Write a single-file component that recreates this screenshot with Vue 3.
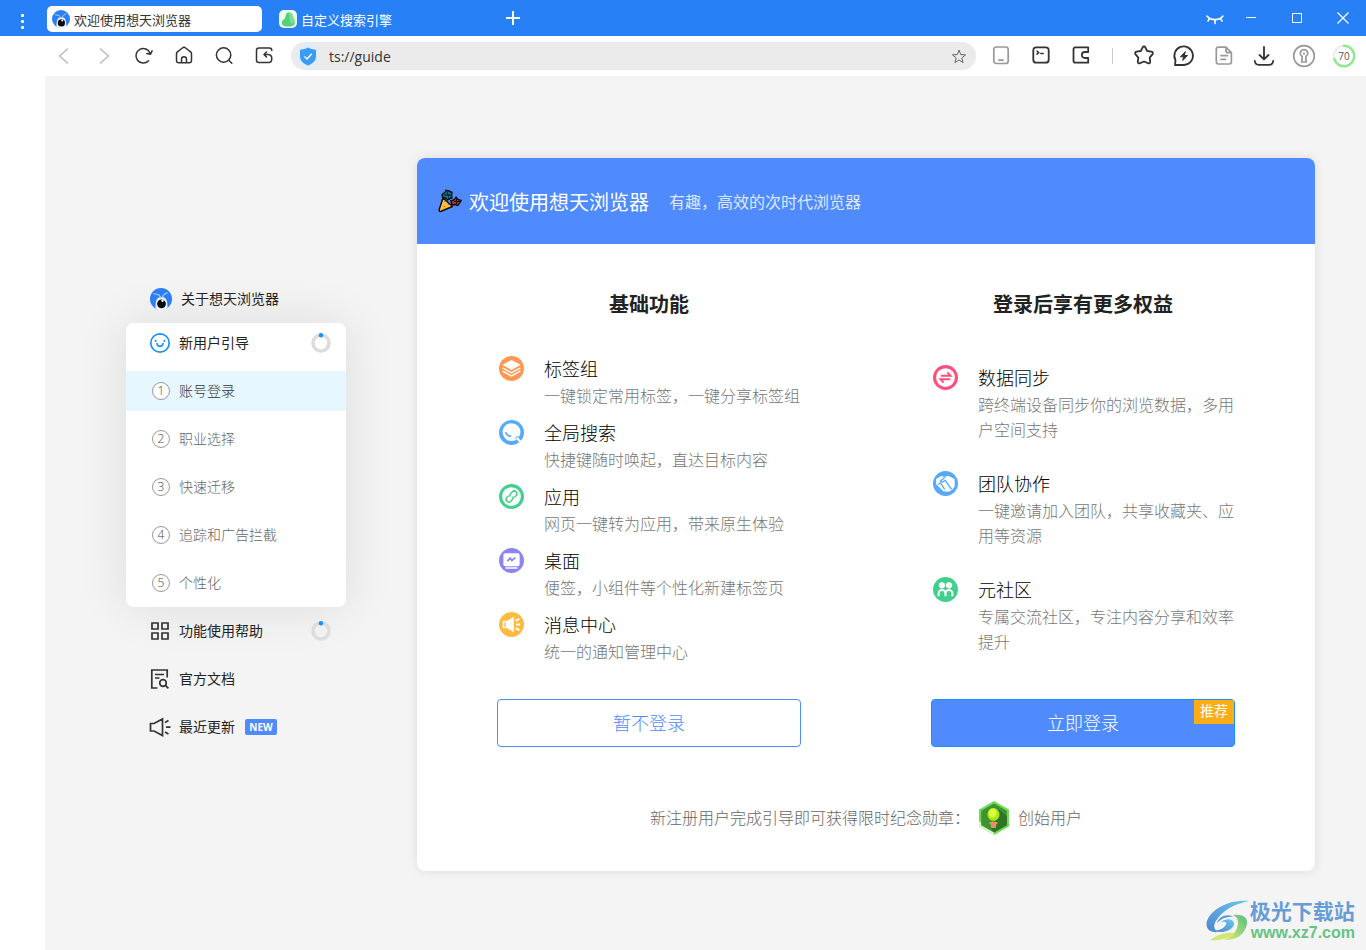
<script setup>
import { ref } from 'vue'

const address = ref('ts://guide')
const activeStep = ref(0)
const steps = ['账号登录', '职业选择', '快速迁移', '追踪和广告拦截', '个性化']

const basics = [
  { icon: 'layers', title: '标签组', text: '一键锁定常用标签，一键分享标签组' },
  { icon: 'search', title: '全局搜索', text: '快捷键随时唤起，直达目标内容' },
  { icon: 'link', title: '应用', text: '网页一键转为应用，带来原生体验' },
  { icon: 'desktop', title: '桌面', text: '便签，小组件等个性化新建标签页' },
  { icon: 'horn', title: '消息中心', text: '统一的通知管理中心' }
]

const benefits = [
  { icon: 'sync', title: '数据同步', text: '跨终端设备同步你的浏览数据，多用户空间支持' },
  { icon: 'team', title: '团队协作', text: '一键邀请加入团队，共享收藏夹、应用等资源' },
  { icon: 'people', title: '元社区', text: '专属交流社区，专注内容分享和效率提升' }
]

const icons = {
  layers:
    '<circle cx="12" cy="12" r="12" fill="#ff9750"/><path d="M12 3.800l8.800 4.600-8.800 5-8.800-5z" fill="#fff"/><path d="M3.500 11.500l8.500 4.600 8.500-4.600M3.500 14.600l8.500 4.600 8.500-4.600" fill="none" stroke="#fff" stroke-width="1.400"/>',
  search:
    '<circle cx="12" cy="12" r="12" fill="#57a9fb"/><circle cx="12" cy="11.600" r="8.600" fill="#fff"/><path d="M17.500 17.500l3.400 3.800" stroke="#fff" stroke-width="2"/><path d="M15.800 17.600l2.800-2.400" stroke="#57a9fb" stroke-width="1"/><path d="M6.600 12.200c.7 2 2.300 3.200 4.400 3.300" fill="none" stroke="#57a9fb" stroke-width="1.600" stroke-linecap="round"/>',
  link:
    '<circle cx="12" cy="12" r="12" fill="#3fd08c"/><circle cx="12" cy="12" r="9" fill="#fff"/><g fill="none" stroke="#3fd08c" stroke-width="1.400" stroke-linecap="round"><path d="M10.600 11.600a2.600 2.600 0 0 1 .6-2.400l1.600-1.700a2.500 2.500 0 0 1 3.600 3.500l-1.300 1.400"/><path d="M13.400 12.400a2.600 2.600 0 0 1-.6 2.400l-1.600 1.700a2.500 2.500 0 0 1-3.600-3.500l1.300-1.400"/></g>',
  desktop:
    '<circle cx="12" cy="12" r="12" fill="#8a85f7"/><rect x="4.200" y="5" width="15.600" height="12.400" rx="1.800" fill="#fff"/><path d="M6.800 19.200h10.400" stroke="#fff" stroke-width="1.400" stroke-linecap="round"/><path d="M8 12.600l2.800-2.800 1.600 2.200 3.400-2.800" fill="none" stroke="#8a85f7" stroke-width="1.700"/>',
  horn:
    '<circle cx="12" cy="12" r="12" fill="#ffba42"/><path d="M3.600 8.400h4.200l6.400-3.800v14.800l-6.400-3.800H3.600z" fill="#fff"/><path d="M5.900 9.600v4.800" stroke="#ffba42" stroke-width="1.300"/><path d="M16 8.600l3.400-2M16.400 12h3.800M16 15.400l3.400 2" stroke="#fff" stroke-width="2"/>',
  sync:
    '<circle cx="12" cy="12" r="12" fill="#ff4f7b"/><circle cx="12" cy="12" r="9" fill="#fff"/><path d="M7.400 10.300h9.400l-3-3.200M16.600 13.700H7.200l3 3.200" fill="none" stroke="#ff4f7b" stroke-width="1.900"/>',
  team:
    '<circle cx="12" cy="12" r="12" fill="#57a9fb"/><path d="M3 7.600l5-2.800 3 1 3.500-1.200 6.300 3v7.200l-2.600 3.400-3.600 1.600-4.600-.4L3 12.800z" fill="#fff"/><path d="M11.400 6L7 9.600c1.400 1.600 3.400.6 4.600-.6l6.200 8.600M5 13l2.200-1.600 4 6.200" fill="none" stroke="#57a9fb" stroke-width="1.300"/>',
  people:
    '<circle cx="12" cy="12" r="12" fill="#3fd08c"/><circle cx="8.600" cy="8" r="3" fill="#fff"/><circle cx="15.400" cy="8" r="3" fill="#fff"/><path d="M5.400 18.500v-2.700a3.300 3.300 0 0 1 6.600 0v2.700M12 18.500v-2.700a3.300 3.300 0 0 1 6.600 0v2.700" fill="none" stroke="#fff" stroke-width="2"/>'
}
</script>

<template>
  <div class="browser">
    <header class="titlebar">
      <button class="menu" aria-label="菜单">
        <svg width="4" height="16" viewBox="0 0 4 16" fill="#fff">
          <rect x="0" y="0" width="3" height="3" rx="1" /><rect x="0" y="6" width="3" height="3" rx="1" /><rect x="0" y="12" width="3" height="3" rx="1" />
        </svg>
      </button>
      <button class="tab current">
        <svg width="18" height="18" viewBox="0 0 22 22">
          <circle cx="11" cy="11" r="11" fill="#2b7ff2" />
          <path d="M5.500 20.500c0-8 1-11.500 6-11.500s6 4 6 11.300a11 11 0 0 1-12 .2z" fill="#eef5ff" />
          <path d="M3.500 5.500L9 7l2 3M17.500 4.500L14 6.500l-2 3" fill="none" stroke="#a9ccff" stroke-width="1.200" />
          <circle cx="11.500" cy="15.800" r="4.400" fill="#0b0b0b" /><circle cx="12.500" cy="12.800" r="1.200" fill="#fff" />
        </svg>
        <span>欢迎使用想天浏览器</span>
      </button>
      <button class="tab">
        <svg width="18" height="18" viewBox="0 0 18 18">
          <rect width="18" height="18" rx="5" fill="#eafbf0" />
          <path d="M9 2.500c3-.6 4.600 1.200 4.800 3.500.2 2 2 3.200 2 6 0 3.500-2.500 4.500-6 4.500-4 0-7-.8-7-3.800 0-2.500 2.500-3 3.300-4.700C7 6.200 6.500 3.200 9 2.500z" fill="#57cf76" />
          <path d="M9 2.500c3-.6 4.600 1.200 4.800 3.500.2 2 2 3.200 2 6-2 2-4 2-5-1s1-5-1.800-8.500z" fill="#7be096" />
        </svg>
        <span>自定义搜索引擎</span>
      </button>
      <button class="newtab" aria-label="新标签页">
        <svg width="14" height="14" viewBox="0 0 14 14"><path d="M7 0v14M0 7h14" stroke="#fff" stroke-width="2" /></svg>
      </button>
      <div class="window">
        <button class="eye" aria-label="隐藏">
          <svg width="20" height="12" viewBox="0 0 20 12" fill="none" stroke="#fff" stroke-width="1.600" stroke-linecap="round"><path d="M2 3c4 4.800 12 4.800 16 0M4.500 5.500L3 8M10 7v3.500M15.500 5.500L17 8" /></svg>
        </button>
        <button aria-label="最小化"><svg width="12" height="12" viewBox="0 0 12 12"><path d="M1 5.500h10" stroke="#fff" /></svg></button>
        <button aria-label="最大化"><svg width="12" height="12" viewBox="0 0 12 12"><path d="M1.500 1.500h9v9h-9z" fill="none" stroke="#fff" /></svg></button>
        <button aria-label="关闭"><svg width="12" height="12" viewBox="0 0 12 12"><path d="M.5.5l11 11M11.500.5l-11 11" stroke="#fff" stroke-width="1.200" /></svg></button>
      </div>
    </header>

    <div class="toolbar">
      <button class="tool dim" aria-label="后退"><svg viewBox="0 0 24 24"><path d="M15.500 5l-8 7 8 7" /></svg></button>
      <button class="tool dim" aria-label="前进"><svg viewBox="0 0 24 24"><path d="M8.500 5l8 7-8 7" /></svg></button>
      <button class="tool" aria-label="刷新"><svg viewBox="0 0 24 24"><path d="M16.600 16.800A7.300 7.300 0 1 1 18.200 9.500M14.800 9.500l3.600.8 1.700-3.400" /></svg></button>
      <button class="tool" aria-label="主页"><svg viewBox="0 0 24 24"><path d="M4.500 9.800c0-.8.300-1.400.9-1.900l5-3.900a2.400 2.400 0 0 1 3.200 0l5 3.900c.6.500.9 1.100.9 1.900v6.600c0 1.500-.8 2.300-2.300 2.300H6.800c-1.500 0-2.300-.8-2.300-2.300zM9.500 18.700v-3.500a2.500 2.500 0 0 1 5 0v3.500" /></svg></button>
      <button class="tool" aria-label="搜索"><svg viewBox="0 0 24 24"><circle cx="11.600" cy="11" r="7.200" /><path d="M16.800 16.200l3 3" /></svg></button>
      <button class="tool" aria-label="恢复标签"><svg viewBox="0 0 24 24"><path d="M19.800 6.500c0-1.500-.9-2.500-2.400-2.500H6.900C5.400 4 4.500 4.800 4.500 6.300v10c0 1.500.9 2.300 2.400 2.300h9.500M14.500 8L12 10.500l2.500 2.500M12.300 10.500h3.800a4 4 0 0 1 3.700 4c0 2.500-1.300 4.100-3.400 4.100" /></svg></button>

      <div class="address">
        <svg width="26" height="26" viewBox="0 0 26 26">
          <circle cx="13" cy="13" r="12.500" fill="#dfeeff" />
          <path d="M13 4.500c2.500 1.600 5 2 8 2.200v6.800c0 4.500-3.500 7-8 9-4.500-2-8-4.500-8-9V6.700c3-.2 5.500-.6 8-2.200z" fill="#3b9cf5" />
          <path d="M9.500 13.500l2.500 2.500 4.800-5.200" fill="none" stroke="#fff" stroke-width="1.400" />
        </svg>
        <input v-model="address" type="text" aria-label="地址栏" />
        <button class="fav" aria-label="收藏"><svg width="16" height="16" viewBox="0 0 16 16"><path d="M8 2l1.700 4.600 4.900.2-3.800 3.100 1.300 4.800L8 11.900l-4.100 2.800 1.300-4.800-3.800-3.100 4.900-.2z" fill="none" stroke="#666" /></svg></button>
      </div>

      <button class="tool grey" aria-label="手机"><svg viewBox="0 0 24 24"><rect x="4.800" y="3" width="14.400" height="16.500" rx="2.500" /><path d="M10 16.200h4" /></svg></button>
      <button class="tool bold" aria-label="终端"><svg viewBox="0 0 24 24"><rect x="4.300" y="3.300" width="15.400" height="15.400" rx="3" /><path d="M8 7.200l1.800 1.500L8 10.200M11.800 9.500h2.400" stroke-width="1.500" /></svg></button>
      <button class="tool bold" aria-label="扩展"><svg viewBox="0 0 24 24"><path d="M19.200 8V3.300H6.400c-1.200 0-1.900.7-1.900 1.900v11.600c0 1.200.7 1.900 1.900 1.900h12.800V14h-3.400a3 3 0 0 1 0-6z" /></svg></button>
      <span class="divider"></span>
      <button class="tool bold" aria-label="收藏夹"><svg viewBox="0 0 24 24"><path d="M10.700 3.300c.6-1.100 2-1.100 2.600 0l1.900 3.700 4.200.7c1.500.3 2 1.600 1 2.700l-2.700 3.200.5 4.200c.1 1.300-.9 2-2.200 1.400L12 17.500l-4 1.700c-1.300.6-2.300-.1-2.200-1.400l.5-4.200-2.700-3.200c-1-1.100-.5-2.400 1-2.700l4.200-.7z" /></svg></button>
      <button class="tool bold" aria-label="消息"><svg viewBox="0 0 24 24"><path d="M3 21l.5-4.800A9.300 9.300 0 1 1 12 21z" /><path d="M13.200 7.800l-4.700 5h3l-.7 3.700 4.700-5h-3z" fill="#333" stroke-width="1" /></svg></button>
      <button class="tool grey" aria-label="笔记"><svg viewBox="0 0 24 24"><path d="M14 3.200H6.500c-1.500 0-2.200.7-2.200 2.200v12.400c0 1.500.7 2.200 2.200 2.200h10.700c1.500 0 2.200-.7 2.200-2.200V8.700zM14 3.200v3.500c0 1.300.7 2 2 2h3.400M9 11.700h6.500M9 15.400h4.500" /></svg></button>
      <button class="tool bold" aria-label="下载"><svg viewBox="0 0 24 24"><path d="M12 3v12M7.500 11l4.500 4.300 4.500-4.300M2.800 17c.3 2.700 1.500 3.800 4 3.800h10.400c2.500 0 3.700-1.100 4-3.800" /></svg></button>
      <button class="tool grey" aria-label="密码"><svg viewBox="0 0 24 24"><circle cx="12" cy="12" r="10.300" /><path d="M10.200 12.500a3.700 3.700 0 1 1 3.600 0l.4 5.500H9.800zM12 9v1" /></svg></button>
      <button class="tool score" aria-label="评分 70">
        <svg viewBox="0 0 24 24"><circle cx="12" cy="12" r="10.200" stroke="#eee" stroke-width="2.500" /><path d="M12 1.800a10.200 10.200 0 1 1-9.700 13.300" stroke="#8eea8e" stroke-width="2.500" /></svg>
        <span>70</span>
      </button>
    </div>

    <div class="content">
      <aside class="rail"></aside>
      <main>
        <nav>
          <a href="#about" class="row">
            <svg width="24" height="24" viewBox="-1 -1 24 24">
              <circle cx="11" cy="11" r="11" fill="#2b7ff2" />
              <path d="M5.500 20.500c0-8 1-11.500 6-11.500s6 4 6 11.300a11 11 0 0 1-12 .2z" fill="#eef5ff" />
              <path d="M3.500 5.500L9 7l2 3M17.500 4.500L14 6.500l-2 3" fill="none" stroke="#a9ccff" stroke-width="1.200" />
              <circle cx="11.500" cy="15.800" r="4.400" fill="#0b0b0b" /><circle cx="12.500" cy="12.800" r="1.200" fill="#fff" />
            </svg>
            <span>关于想天浏览器</span>
          </a>
          <section class="group">
            <a href="#guide" class="step">
              <svg width="22" height="22" viewBox="0 0 22 22" fill="none" stroke="#1890ff" stroke-width="1.700" stroke-linecap="round"><circle cx="11" cy="11" r="9.200" /><path d="M6.600 9v-.3M15.400 9v-.3" stroke-width="2" /><path d="M8 11.700c.7 3.600 5.300 3.600 6 0" /></svg>
              <span>新用户引导</span>
              <svg class="ring" width="20" height="20" viewBox="0 0 20 20" fill="none"><circle cx="10" cy="10" r="8" stroke="#ddd" stroke-width="3.600" /><circle cx="10" cy="2.200" r="2.200" fill="#1890ff" /></svg>
            </a>
            <a
              v-for="(step, i) in steps"
              :key="step"
              href="#step"
              class="step sub"
              :class="{ active: i === activeStep }"
              @click.prevent="activeStep = i"
            >
              <span class="num">{{ i + 1 }}</span>
              <span>{{ step }}</span>
            </a>
          </section>
          <a href="#help" class="row">
            <svg width="22" height="22" viewBox="0 0 22 22" fill="none" stroke="#333" stroke-width="1.700"><path d="M3 3h6v6H3zM13 3h6v6h-6zM3 13h6v6H3zM13 13h6v6h-6z" /></svg>
            <span>功能使用帮助</span>
            <svg class="ring" width="20" height="20" viewBox="0 0 20 20" fill="none"><circle cx="10" cy="10" r="8" stroke="#ddd" stroke-width="3.600" /><circle cx="10" cy="2.200" r="2.200" fill="#1890ff" /></svg>
          </a>
          <a href="#docs" class="row">
            <svg width="22" height="22" viewBox="0 0 22 22" fill="none" stroke="#333" stroke-width="1.700"><path d="M8.500 20H2.800V2h15.400v7.500M6 6.500h9M6 10h4.500" /><circle cx="14" cy="15" r="3.300" /><path d="M16.400 17.400l3 3" /></svg>
            <span>官方文档</span>
          </a>
          <a href="#news" class="row">
            <svg width="22" height="22" viewBox="0 0 22 22" fill="none" stroke="#333" stroke-width="1.700"><path d="M1.500 7.500H5L13.500 3v16.500L5 15H1.500zM16 6.500l3.500-2M17 11.200h4.500M16 16l3.500 2" /></svg>
            <span>最近更新</span>
            <b class="new">NEW</b>
          </a>
        </nav>

        <article class="card">
          <header class="hero">
            <svg width="24" height="24" viewBox="0 0 24 24" stroke="#111" stroke-linejoin="round">
              <path d="M5 9L1.200 20.500c-.4 1.500.5 2.200 1.900 1.800L14.500 17.500z" fill="#fdbf3e" stroke-width="1.500" />
              <path d="M4 5.500l3-2 1-2.300 3 .8 3 1.500-.5 3 .5 2.500-3 .5-1.500 1.500-2-2-3-1z" fill="#16788f" stroke-width="1.400" />
              <path d="M13 12l3.500-1.500L18 8l2 2.500 3.200 1-1.700 2.500-1.500 2.500-3-1-3 .5z" fill="#c62a20" stroke-width="1.400" />
              <path d="M9 2.500L10.500 8M6 6h7M16 12.500h6M18.500 10v5M11 10l2.500 2.500" stroke-width="1" fill="none" />
              <path d="M7 12v1M6 17v1M10.500 15v1" stroke="#e8542c" stroke-width="1.600" />
            </svg>
            <h1>欢迎使用想天浏览器</h1>
            <p>有趣，高效的次时代浏览器</p>
          </header>

          <div class="columns">
            <section>
              <h2>基础功能</h2>
              <ul class="basic">
                <li v-for="item in basics" :key="item.title">
                  <svg class="feature" viewBox="0 0 24 24" v-html="icons[item.icon]"></svg>
                  <div><h3>{{ item.title }}</h3><p>{{ item.text }}</p></div>
                </li>
              </ul>
              <button class="action">暂不登录</button>
            </section>
            <section>
              <h2>登录后享有更多权益</h2>
              <ul class="more">
                <li v-for="item in benefits" :key="item.title">
                  <svg class="feature" viewBox="0 0 24 24" v-html="icons[item.icon]"></svg>
                  <div><h3>{{ item.title }}</h3><p>{{ item.text }}</p></div>
                </li>
              </ul>
              <button class="action primary">立即登录<span class="flag">推荐</span></button>
            </section>
          </div>

          <footer>
            <span>新注册用户完成引导即可获得限时纪念勋章：</span>
            <svg width="32" height="36" viewBox="0 0 32 36">
              <path d="M16 1l15 8.500v17L16 35 1 26.500v-17z" fill="#6edb58" />
              <path d="M1 21v5.500L16 35v-3z" fill="#d4f7c8" />
              <path d="M16 3.500l12.800 7.300v14.400L16 32.500 3.200 25.200V10.800z" fill="#3f9432" />
              <path d="M20 9l8.800 7v9.200L16 32.500l-3.500-5z" fill="#2f7327" />
              <ellipse cx="15.500" cy="14.500" rx="6" ry="6.500" fill="#a6e81a" />
              <ellipse cx="14.500" cy="13" rx="4" ry="4.500" fill="#dcff3a" />
              <path d="M15.500 20v3" stroke="#86b817" stroke-width="2" />
              <path d="M11.500 22h8v2h-1l-.7 4h-4.600l-.7-4h-1z" fill="#e38e6c" />
            </svg>
            <span>创始用户</span>
          </footer>
        </article>
      </main>
    </div>

    <div class="watermark">
      <svg width="44" height="42" viewBox="0 0 44 42">
        <defs>
          <linearGradient id="wave" x1="1" y1="0" x2="0" y2="1"><stop offset="0" stop-color="#69c8ee" /><stop offset="1" stop-color="#4f86cc" /></linearGradient>
          <linearGradient id="leaf" x1="1" y1="0" x2="0" y2="1"><stop offset="0" stop-color="#58bd83" /><stop offset="1" stop-color="#e2ec72" /></linearGradient>
        </defs>
        <path d="M43 1C24-1 5 9 1 21c-2 8 3 12 11 11-5-3-5-8 0-14C19 9 29 4 43 1z" fill="url(#wave)" />
        <path d="M8 30c5 4 17 2 20-5 1-6-7-8-13-3 5-1 7 1 4 4-2 3-7 5-11 4z" fill="url(#wave)" />
        <path d="M11 23c2-7 10-10 17-6-6-1-12 1-17 6z" fill="#5b9bd8" />
        <path d="M27 15c9-1 15 2 14 9-2 11-12 17-23 16 7-3 13-8 14-16 0-5-1-7-5-9z" fill="url(#leaf)" />
        <path d="M4 40c8-6 16-8 25-7-5 5-14 8-25 7z" fill="#d5e575" />
      </svg>
      <div><b>极光下载站</b><em>www.xz7.com</em></div>
    </div>
  </div>
</template>

<style>
body {
  margin: 0;
  background: #f4f4f4;
}
</style>

<style scoped>
.browser {
  position: relative;
  min-height: 100vh;
  display: flex;
  flex-direction: column;
  font-family: "Open Sans", "Noto Sans CJK SC", sans-serif;
  font-size: 14px;
  color: #222;
}
button {
  border: 0;
  padding: 0;
  background: none;
  font: inherit;
  color: inherit;
  display: flex;
  align-items: center;
  justify-content: center;
}
svg {
  flex: none;
}
h1, h2, h3, p, ul {
  margin: 0;
  padding: 0;
}
a {
  color: inherit;
  text-decoration: none;
}
.titlebar {
  height: 36px;
  display: flex;
  align-items: center;
  background: #2780f5;
  color: #fff;
}
.menu {
  width: 46px;
  margin-right: 1px;
  height: 36px;
  padding-top: 8px;
}
.tab {
  width: 215px;
  height: 26px;
  margin-top: 2px;
  padding: 0 5px;
  gap: 4px;
  justify-content: flex-start;
  border-radius: 5px;
  font-size: 13px;
}
.current {
  margin-right: 12px;
  background: #fff;
  color: #333;
}
.newtab {
  width: 30px;
  height: 36px;
  margin-left: 9px;
}
.window {
  display: flex;
  margin-left: auto;
}
.window button {
  width: 46px;
  height: 36px;
}
.window .eye {
  width: 26px;
  padding-top: 2px;
}
.toolbar {
  height: 40px;
  padding: 0 2px 0 44px;
  display: flex;
  align-items: center;
  background: #fff;
}
.tool {
  width: 40px;
  height: 40px;
  flex: none;
}
.tool svg {
  width: 24px;
  height: 24px;
  fill: none;
  stroke: #333;
  stroke-width: 1.500;
  stroke-linecap: round;
  stroke-linejoin: round;
}
.tool.bold svg {
  stroke-width: 1.800;
}
.tool.dim svg {
  stroke: #bbb;
}
.tool.grey svg {
  stroke: #999;
  stroke-width: 1.700;
}
.tool.score {
  position: relative;
}
.tool.score span {
  position: absolute;
  font-size: 10px;
  color: #555;
}
.address {
  flex: 1;
  height: 28px;
  margin: 0 5px 0 7px;
  padding: 0 9px 0 4px;
  display: flex;
  align-items: center;
  border-radius: 14px;
  background: #ebebeb;
}
.address input {
  flex: 1;
  min-width: 0;
  margin-left: 8px;
  padding: 0;
  border: 0;
  outline: 0;
  background: none;
  font: 14px "Open Sans", sans-serif;
  color: #333;
}
.divider {
  width: 1px;
  height: 16px;
  margin: 0 11px;
  background: #ccc;
}
.content {
  flex: 1;
  display: flex;
}
.rail {
  width: 45px;
  flex: none;
  background: #fff;
}
main {
  flex: 1;
  display: flex;
  align-items: center;
  gap: 71px;
  padding: 82px 51px 79px 81px;
  box-sizing: border-box;
  background: #f4f4f4;
}
nav {
  width: 220px;
  flex: none;
  padding-bottom: 3px;
}
.row, .step {
  height: 48px;
  padding: 0 15px 0 23px;
  display: flex;
  align-items: center;
  gap: 8px;
}
.step {
  height: 40px;
}
.row > span, .step > span:last-of-type {
  padding-bottom: 2px;
}
.group {
  display: flex;
  flex-direction: column;
  gap: 8px;
  padding-bottom: 4px;
  border-radius: 8px;
  background: #fff;
  box-shadow: 0 0 50px rgba(0, 0, 0, 0.1);
}
.ring {
  margin-left: auto;
}
.sub {
  font-weight: 300;
  color: #666;
}
.sub.active {
  background: #e6f7ff;
  color: #333;
}
.num {
  width: 16px;
  height: 16px;
  margin: 0 1px 0 3px;
  border: 1px solid #999;
  border-radius: 50%;
  background: #fff;
  font-size: 12px;
  line-height: 16px;
  text-align: center;
  color: #444;
}
.new {
  width: 32px;
  height: 16px;
  margin-left: 2px;
  border-radius: 2px;
  background: #508bfe;
  color: #fff;
  font-size: 10px;
  line-height: 16px;
  text-align: center;
}
.card {
  flex: 1;
  min-width: 0;
  overflow: hidden;
  border-radius: 8px;
  background: #fff;
  box-shadow: 0 0 12px rgba(0, 0, 0, 0.1);
}
.hero {
  height: 86px;
  padding: 0 21px;
  display: flex;
  align-items: center;
  background: #508bfe;
  color: #fff;
}
.hero h1 {
  margin: 0 20px 0 7px;
  font-size: 20px;
  font-weight: 400;
}
.hero p {
  font-size: 16px;
  opacity: 0.8;
}
.columns {
  display: grid;
  grid-template-columns: 1fr 1fr;
  gap: 130px;
  padding: 46px 80px 0;
}
.columns section {
  display: flex;
  flex-direction: column;
}
h2 {
  font-size: 20px;
  line-height: 30px;
  text-align: center;
}
ul {
  flex: 1;
  display: flex;
  flex-direction: column;
  list-style: none;
}
.basic {
  margin: 35px 0 34px;
  gap: 10px;
}
.more {
  margin: 44px 0 34px;
  gap: 27px;
}
li {
  display: flex;
  gap: 20px;
}
.feature {
  width: 25px;
  height: 25px;
  margin: 1px 0 0 2px;
}
h3 {
  font-size: 18px;
  line-height: 28px;
  font-weight: 300;
  color: #000;
}
li p {
  margin-top: 1px;
  font-size: 16px;
  line-height: 25px;
  font-weight: 300;
  color: #777;
}
.action {
  position: relative;
  height: 48px;
  padding-bottom: 2px;
  border: 1px solid #508bfe;
  border-radius: 4px;
  font-size: 18px;
  font-weight: 300;
  color: #508bfe;
  box-shadow: 0 2px 0 rgba(0, 0, 0, 0.02);
}
.action.primary {
  border-color: #1890ff;
  background: #508bfe;
  color: #fff;
}
.flag {
  position: absolute;
  top: 0;
  right: 0;
  width: 40px;
  height: 24px;
  background: #faad14;
  font-size: 14px;
  font-weight: 400;
  line-height: 22px;
}
footer {
  margin: 53px 0 35px;
  display: flex;
  align-items: center;
  justify-content: center;
  gap: 8px;
  font-size: 16px;
  line-height: 36px;
  font-weight: 300;
  color: #666;
}
.watermark {
  position: absolute;
  right: 11px;
  bottom: 7px;
  display: flex;
  align-items: center;
}
.watermark div {
  display: flex;
  flex-direction: column;
}
.watermark b {
  font-size: 21px;
  line-height: 24px;
  color: #669dd6;
}
.watermark em {
  padding-left: 1px;
  font: 700 16px/20px "Liberation Sans", sans-serif;
  color: #65c483;
}
</style>
